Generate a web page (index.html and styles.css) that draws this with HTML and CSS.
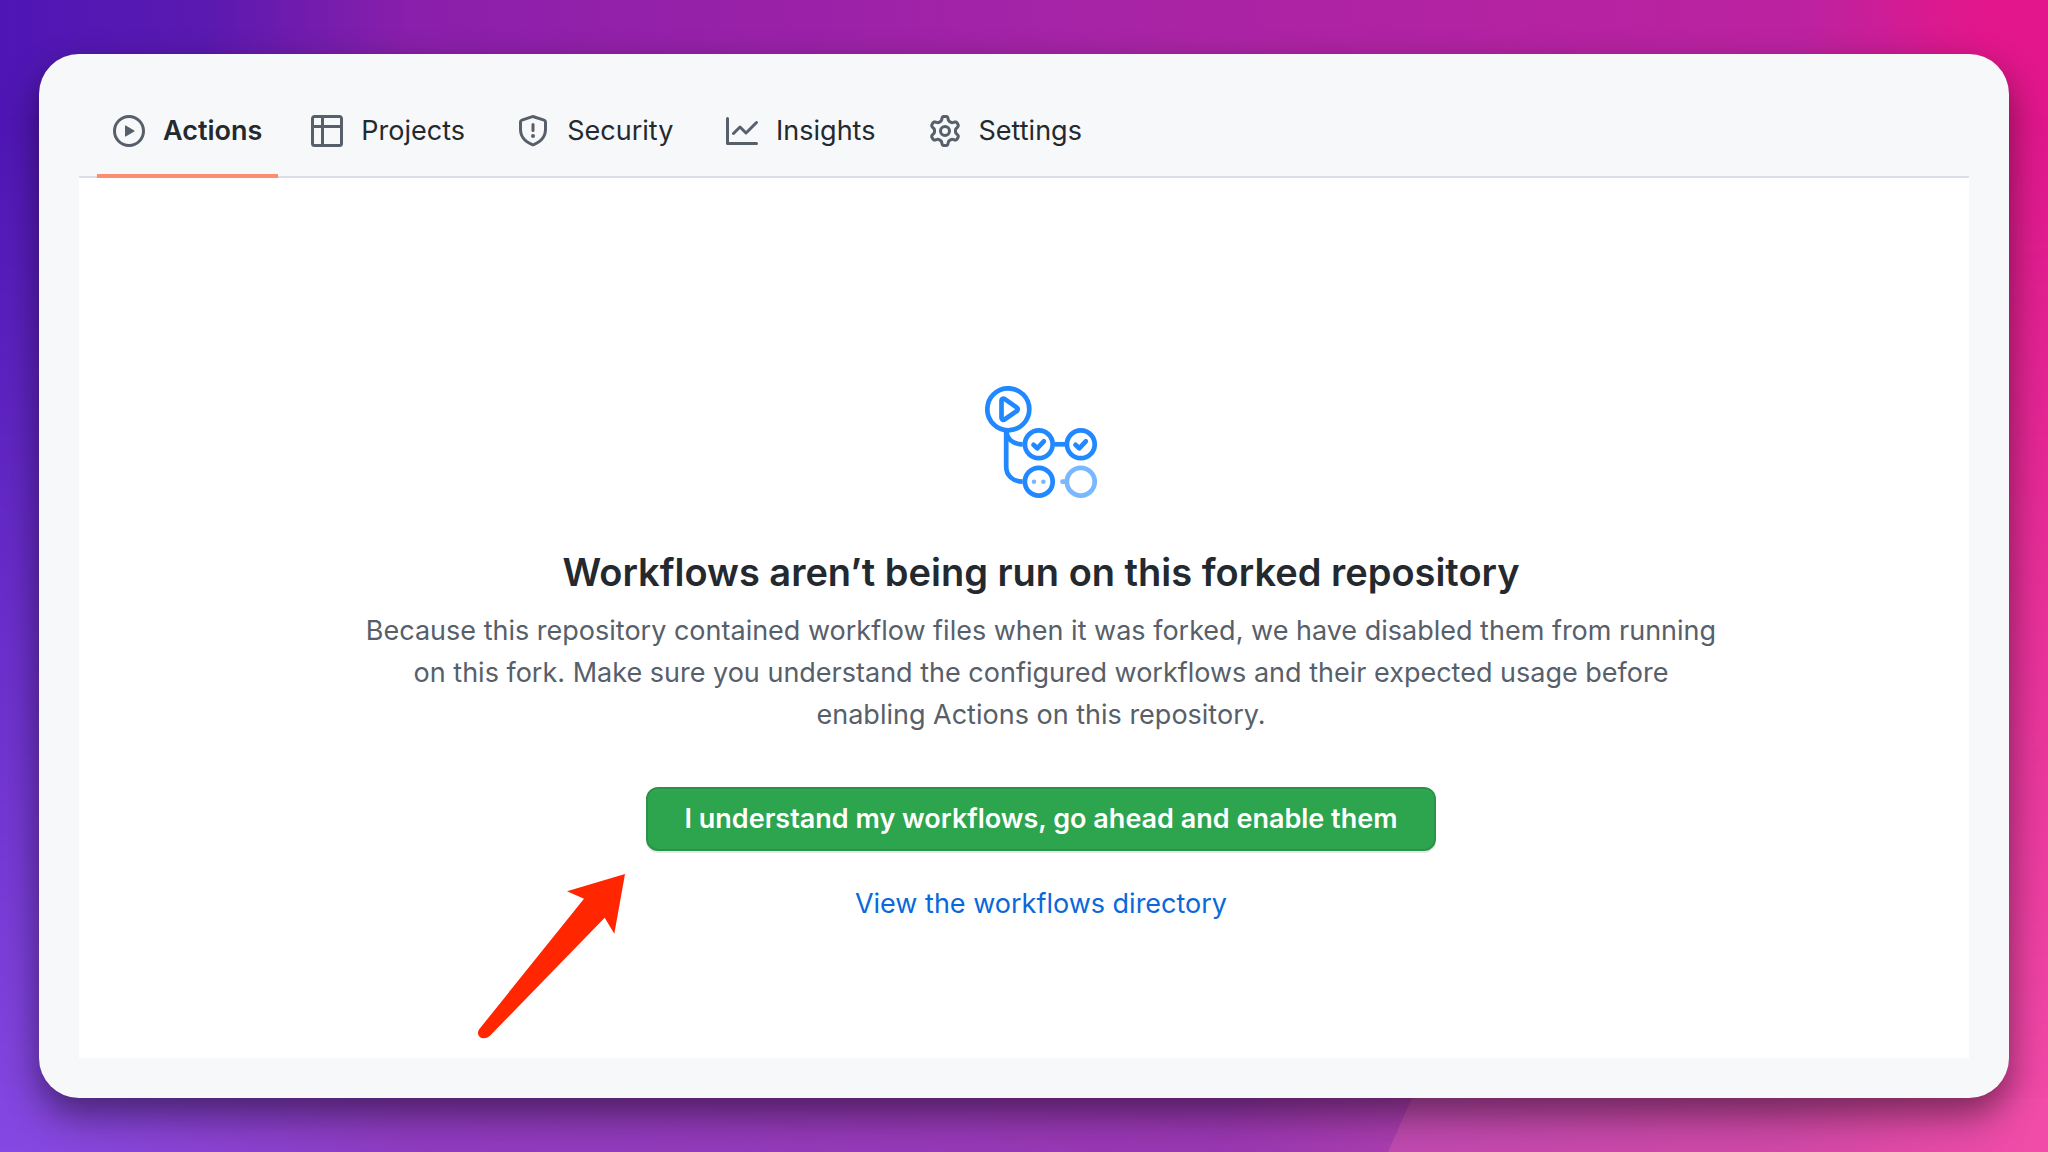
FILE: index.html
```html
<!DOCTYPE html>
<html lang="en">
<head>
<meta charset="utf-8">
<title>Actions</title>
<meta name="viewport" content="width=device-width, initial-scale=1">
<link rel="stylesheet" href="styles.css">
</head>
<body>
<div class="window">
  <nav class="tabs" aria-label="Repository">
    <a class="tab tab-current" href="#actions" aria-current="page">
      <svg class="tab-icon" viewBox="0 0 16 16" aria-hidden="true"><path fill-rule="evenodd" d="M1.5 8a6.5 6.5 0 1113 0 6.5 6.5 0 01-13 0zM8 0a8 8 0 100 16A8 8 0 008 0zM6.379 5.227A.25.25 0 006 5.442v5.117a.25.25 0 00.379.214l4.264-2.559a.25.25 0 000-.428L6.379 5.227z"/></svg>
      <span class="tab-label" data-label="Actions">Actions</span>
    </a>
    <a class="tab" href="#projects">
      <svg class="tab-icon" viewBox="0 0 16 16" aria-hidden="true"><path fill-rule="evenodd" d="M0 1.75C0 .784.784 0 1.75 0h12.5C15.216 0 16 .784 16 1.75v12.5A1.75 1.75 0 0114.25 16H1.75A1.75 1.75 0 010 14.25V1.75zM1.5 6.5v7.75c0 .138.112.25.25.25H5v-8H1.5zM6.5 6.5v8h7.75a.25.25 0 00.25-.25V6.5h-8zM14.5 5V1.75a.25.25 0 00-.25-.25H6.5V5h8zM5 5V1.5H1.75a.25.25 0 00-.25.25V5H5z"/></svg>
      <span class="tab-label" data-label="Projects">Projects</span>
    </a>
    <a class="tab" href="#security">
      <svg class="tab-icon" viewBox="0 0 16 16" aria-hidden="true"><path fill-rule="evenodd" d="M7.467.133a1.75 1.75 0 011.066 0l5.25 1.68A1.75 1.75 0 0115 3.48V7c0 1.566-.32 3.182-1.303 4.682-.983 1.498-2.585 2.813-5.032 3.855a1.7 1.7 0 01-1.33 0c-2.447-1.042-4.049-2.357-5.032-3.855C1.32 10.182 1 8.566 1 7V3.48a1.75 1.75 0 011.217-1.667l5.25-1.68zm.61 1.429a.25.25 0 00-.153 0l-5.25 1.68a.25.25 0 00-.174.238V7c0 1.358.275 2.666 1.057 3.86.784 1.194 2.121 2.34 4.366 3.297a.2.2 0 00.154 0c2.245-.956 3.582-2.104 4.366-3.298C13.225 9.666 13.5 8.36 13.5 7V3.48a.25.25 0 00-.174-.237l-5.25-1.68zM9 10.5a1 1 0 11-2 0 1 1 0 012 0zm-.25-5.75a.75.75 0 10-1.5 0v3a.75.75 0 001.5 0v-3z"/></svg>
      <span class="tab-label" data-label="Security">Security</span>
    </a>
    <a class="tab" href="#insights">
      <svg class="tab-icon" viewBox="0 0 16 16" aria-hidden="true"><path fill-rule="evenodd" d="M1.5 1.75a.75.75 0 00-1.5 0v12.5c0 .414.336.75.75.75h14.5a.75.75 0 000-1.5H1.5V1.75zm14.28 2.53a.75.75 0 00-1.06-1.06L10 7.94 7.53 5.47a.75.75 0 00-1.06 0L3.22 8.72a.75.75 0 001.06 1.06L7 7.06l2.47 2.47a.75.75 0 001.06 0l5.25-5.25z"/></svg>
      <span class="tab-label" data-label="Insights">Insights</span>
    </a>
    <a class="tab" href="#settings">
      <svg class="tab-icon" viewBox="0 0 16 16" aria-hidden="true"><path fill-rule="evenodd" d="M7.429 1.525a6.593 6.593 0 011.142 0c.036.003.108.036.137.146l.289 1.105c.147.56.55.967.997 1.189.174.086.341.183.501.29.417.278.97.423 1.53.27l1.102-.303c.11-.03.175.016.195.046.219.31.41.641.573.989.014.031.022.11-.059.19l-.815.806c-.411.406-.562.957-.53 1.456a4.588 4.588 0 010 .582c-.032.499.119 1.05.53 1.456l.815.806c.08.08.073.159.059.19a6.494 6.494 0 01-.573.99c-.02.029-.086.074-.195.045l-1.103-.303c-.559-.153-1.112-.008-1.529.27-.16.107-.327.204-.5.29-.449.222-.851.628-.998 1.189l-.289 1.105c-.029.11-.101.143-.137.146a6.613 6.613 0 01-1.142 0c-.036-.003-.108-.037-.137-.146l-.289-1.105c-.147-.56-.55-.967-.997-1.189a4.502 4.502 0 01-.501-.29c-.417-.278-.97-.423-1.53-.27l-1.102.303c-.11.03-.175-.016-.195-.046a6.492 6.492 0 01-.573-.989c-.014-.031-.022-.11.059-.19l.815-.806c.411-.406.562-.957.53-1.456a4.587 4.587 0 010-.582c.032-.499-.119-1.05-.53-1.456l-.815-.806c-.08-.08-.073-.159-.059-.19a6.44 6.44 0 01.573-.99c.02-.029.086-.075.195-.045l1.103.303c.559.153 1.112.008 1.529-.27.16-.107.327-.204.5-.29.449-.222.851-.628.998-1.189l.289-1.105c.029-.11.101-.143.137-.146zM8 0c-.236 0-.47.01-.701.03-.743.065-1.29.615-1.458 1.261l-.29 1.106c-.017.066-.078.158-.211.224a5.994 5.994 0 00-.668.386c-.123.082-.233.09-.3.071L3.27 2.776c-.644-.177-1.392.02-1.82.63a7.977 7.977 0 00-.704 1.217c-.315.675-.111 1.422.363 1.891l.815.806c.05.048.098.147.088.294a6.084 6.084 0 000 .772c.01.147-.038.246-.088.294l-.815.806c-.474.469-.678 1.216-.363 1.891.2.428.436.835.704 1.218.428.609 1.176.806 1.82.63l1.103-.303c.066-.019.176-.011.299.071.213.143.436.272.668.386.133.066.194.158.212.224l.289 1.106c.169.646.715 1.196 1.458 1.26a8.094 8.094 0 001.402 0c.743-.064 1.29-.614 1.458-1.26l.29-1.106c.017-.066.078-.158.211-.224a5.98 5.98 0 00.668-.386c.123-.082.233-.09.3-.071l1.102.302c.644.177 1.392-.02 1.82-.63.268-.382.505-.789.704-1.217.315-.675.111-1.422-.364-1.891l-.814-.806c-.05-.048-.098-.147-.088-.294a6.1 6.1 0 000-.772c-.01-.147.039-.246.088-.294l.814-.806c.475-.469.679-1.216.364-1.891a7.992 7.992 0 00-.704-1.218c-.428-.609-1.176-.806-1.82-.63l-1.103.303c-.066.019-.176.011-.299-.071a5.991 5.991 0 00-.668-.386c-.133-.066-.194-.158-.212-.224L10.16 1.29C9.99.645 9.444.095 8.701.031A8.094 8.094 0 008 0zm1.5 8a1.5 1.5 0 11-3 0 1.5 1.5 0 013 0zM11 8a3 3 0 11-6 0 3 3 0 016 0z"/></svg>
      <span class="tab-label" data-label="Settings">Settings</span>
    </a>
  </nav>

  <main class="panel">
    <svg class="workflow-icon" viewBox="0 0 112 112" fill="none" stroke="#2188ff" stroke-width="4.7" aria-hidden="true">
      <circle cx="23.3" cy="23.3" r="21"/>
      <path d="M16.5 14.6v17.2c0 1.6 1.7 2.6 3 1.7l12.4-8.5c1.2-.9 1.2-2.6 0-3.4L19.5 12.9c-1.3-.9-3 .1-3 1.7z"/>
      <path d="M21.2 45v36c0 8 6.5 14.700 16.500 14.700M21.200 45c1 8 7 13.300 16.500 13.300"/>
      <circle cx="53.8" cy="58.3" r="13.9"/>
      <circle cx="95.8" cy="58.3" r="13.9"/>
      <circle cx="53.8" cy="95.7" r="13.9"/>
      <path d="M70 58.3h10"/>
      <path stroke-linecap="round" stroke-linejoin="round" d="M48.500 58.800l3.700 3.500 6.600-7M90.500 58.800l3.700 3.500 6.600-7"/>
      <g stroke="#79b8ff">
        <circle cx="95.8" cy="95.7" r="13.9"/>
        <path stroke-linecap="round" d="M77.500 95.700h4"/>
      </g>
      <g stroke="none" fill="#79b8ff">
        <circle cx="49" cy="95.7" r="2.300"/>
        <circle cx="58.4" cy="95.7" r="2.300"/>
      </g>
    </svg>
    <h1 class="title">Workflows aren’t being run on this forked repository</h1>
    <p class="description">Because this repository contained workflow files when it was forked, we have disabled them from running on this fork. Make sure you understand the configured workflows and their expected usage before enabling Actions on this repository.</p>
    <form class="enable">
      <button class="enable-button" type="button">I understand my workflows, go ahead and enable them</button>
      <svg class="pointer" viewBox="0 0 150 166" aria-hidden="true"><path fill="#ff2600" d="M148 0L90 17.300l17 7.400L2 155.500C-1 160 3 165 6.500 164.200c3 0 5-1 7-3L127.700 43.700l9.600 16z"/></svg>
    </form>
    <a class="directory-link" href="#workflows">View the workflows directory</a>
  </main>
</div>
</body>
</html>
```

FILE: styles.css
```css
* {
  box-sizing: border-box;
}

body {
  position: relative;
  display: flex;
  min-height: 100vh;
  margin: 0;
  padding: 54px 39px;
  background:
    linear-gradient(45deg, transparent 60%, #e3168a 100%) top right / 240px 240px no-repeat,
    linear-gradient(to right, #4f16b6 0%, #5a19b0 10%, #8a1fab 20%, #a824a6 55%, #bc22a0 88%, #e0178c 97%);
  color: #24292f;
  font-family: Inter, "Liberation Sans", sans-serif;
  font-size: 27px;
  line-height: 42px;
}

/* Lighter wash that grows towards the bottom of the backdrop */
body::before {
  content: "";
  position: absolute;
  inset: 0;
  background: linear-gradient(to right, #8549e2 0%, #8f3cc0 20%, #9a38b2 60%, #ca48aa 85%, #f24ca8 100%);
  mask-image: linear-gradient(to bottom, transparent 10%, #000 100%);
}

/* Pink wedge in the bottom right corner */
body::after {
  content: "";
  position: absolute;
  right: 0;
  bottom: 0;
  width: 660px;
  height: 54px;
  background: linear-gradient(to right, #bf49b0, #d048a6 60%, #f24ca8);
  clip-path: polygon(24px 0, 100% 0, 100% 100%, 0 100%);
}

.window {
  position: relative;
  z-index: 1;
  display: flex;
  flex: 1;
  flex-direction: column;
  padding: 40px;
  border-radius: 40px;
  background: #f6f8fa;
  box-shadow: 0 16px 36px rgba(0, 0, 0, 0.48);
}

.tabs {
  display: flex;
  gap: 17px;
  padding: 0 18px;
  border-bottom: 2px solid #d8dee4;
}

.tab {
  display: flex;
  align-items: center;
  gap: 18px;
  height: 84px;
  margin-bottom: -2px;
  padding: 0 16px 6px;
  border-bottom: 4px solid transparent;
  color: inherit;
  text-decoration: none;
}

.tab-current {
  border-color: #fd8c73;
  font-weight: 600;
}

.tab-icon {
  width: 32px;
  height: 32px;
  fill: #57606a;
}

/* Reserves the bold width so that selecting a tab does not move the others */
.tab-label::after {
  content: attr(data-label);
  display: block;
  height: 0;
  overflow: hidden;
  font-weight: 600;
  visibility: hidden;
}

.panel {
  display: flex;
  flex: 1;
  flex-direction: column;
  align-items: center;
  padding: 208px 0 0 34px;
  background: #fff;
}

.workflow-icon {
  width: 112px;
  height: 112px;
}

.title {
  margin: 44px 0 0;
  font-size: 38px;
  font-weight: 600;
  line-height: 60px;
}

.description {
  max-width: 1360px;
  margin: 8px 0 0;
  color: #57606a;
  text-align: center;
}

.enable {
  position: relative;
  margin-top: 51px;
}

.enable-button {
  display: block;
  height: 64px;
  padding: 0 36px;
  border: 2px solid #2b9348;
  border-radius: 12px;
  background: #2da44e;
  box-shadow: 0 2px 0 rgba(27, 31, 36, 0.1), inset 0 2px 0 rgba(255, 255, 255, 0.03);
  color: #fff;
  font: inherit;
  font-weight: 600;
}

.pointer {
  position: absolute;
  top: 87px;
  right: calc(100% + 19px);
  width: 150px;
  height: 166px;
}

.directory-link {
  margin-top: 32px;
  color: #0969da;
  text-decoration: none;
}
```
